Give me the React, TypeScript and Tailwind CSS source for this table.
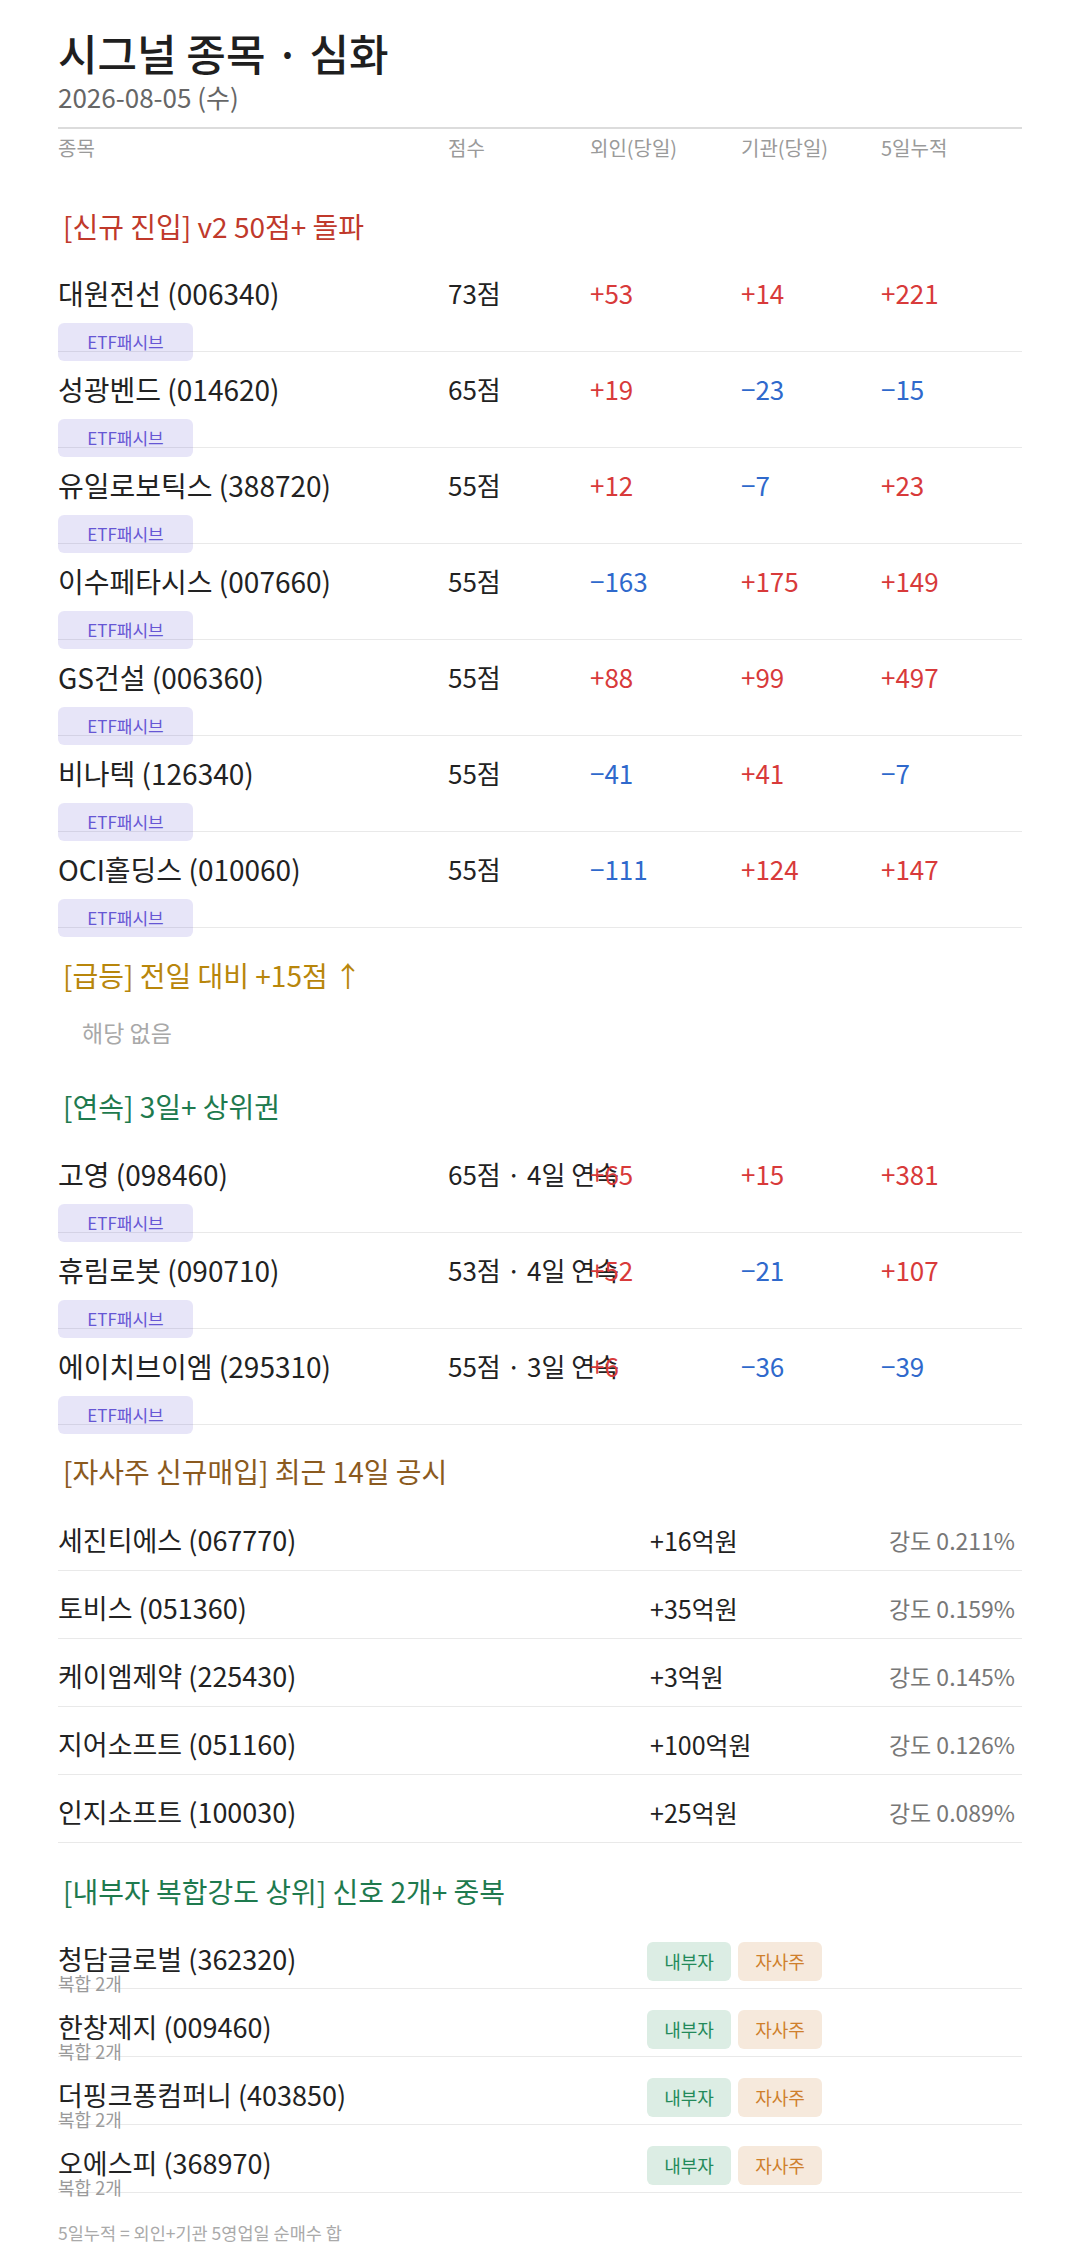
type Flow = {
  name: string;
  code: string;
  score: string;
  foreign: string;
  inst: string;
  cum5: string;
};

type Buyback = { name: string; code: string; amount: string; strength: string };

type Insider = { name: string; code: string; combo: string };

const NEW_ENTRIES: Flow[] = [
  { name: "대원전선",     code: "006340", score: "73점", foreign: "+53",  inst: "+14",  cum5: "+221" },
  { name: "성광벤드",     code: "014620", score: "65점", foreign: "+19",  inst: "−23",  cum5: "−15" },
  { name: "유일로보틱스", code: "388720", score: "55점", foreign: "+12",  inst: "−7",   cum5: "+23" },
  { name: "이수페타시스", code: "007660", score: "55점", foreign: "−163", inst: "+175", cum5: "+149" },
  { name: "GS건설",       code: "006360", score: "55점", foreign: "+88",  inst: "+99",  cum5: "+497" },
  { name: "비나텍",       code: "126340", score: "55점", foreign: "−41",  inst: "+41",  cum5: "−7" },
  { name: "OCI홀딩스",    code: "010060", score: "55점", foreign: "−111", inst: "+124", cum5: "+147" },
];

const STREAKS: Flow[] = [
  { name: "고영",         code: "098460", score: "65점 · 4일 연속", foreign: "+65", inst: "+15", cum5: "+381" },
  { name: "휴림로봇",     code: "090710", score: "53점 · 4일 연속", foreign: "+52", inst: "−21", cum5: "+107" },
  { name: "에이치브이엠", code: "295310", score: "55점 · 3일 연속", foreign: "+6",  inst: "−36", cum5: "−39" },
];

const BUYBACKS: Buyback[] = [
  { name: "세진티에스", code: "067770", amount: "+16억원",  strength: "강도 0.211%" },
  { name: "토비스",     code: "051360", amount: "+35억원",  strength: "강도 0.159%" },
  { name: "케이엠제약", code: "225430", amount: "+3억원",   strength: "강도 0.145%" },
  { name: "지어소프트", code: "051160", amount: "+100억원", strength: "강도 0.126%" },
  { name: "인지소프트", code: "100030", amount: "+25억원",  strength: "강도 0.089%" },
];

const INSIDERS: Insider[] = [
  { name: "청담글로벌",     code: "362320", combo: "복합 2개" },
  { name: "한창제지",       code: "009460", combo: "복합 2개" },
  { name: "더핑크퐁컴퍼니", code: "403850", combo: "복합 2개" },
  { name: "오에스피",       code: "368970", combo: "복합 2개" },
];

// ─── Pieces ────────────────────────────────────────────────────────────────────

function Num({ value }: { value: string }) {
  const negative = value.startsWith("−");
  return (
    <span className={`whitespace-nowrap ${negative ? "text-[#2f69cc]" : "text-[#d83a3a]"}`}>
      {value}
    </span>
  );
}

function SectionTitle({ color, children }: { color: string; children: React.ReactNode }) {
  return (
    <h2 className={`pl-[5px] text-[28px] leading-[36px] whitespace-nowrap ${color}`}>{children}</h2>
  );
}

function FlowRow({ row }: { row: Flow }) {
  return (
    <div className="border-b border-[#e9e9e9] pt-[19px]">
      <div className="grid grid-cols-[390px_142px_151px_140px_141px] text-[26px] leading-[36px] text-[#222]">
        <span className="text-[28px] whitespace-nowrap">
          {row.name} ({row.code})
        </span>
        <span className="whitespace-nowrap">{row.score}</span>
        <Num value={row.foreign} />
        <Num value={row.inst} />
        <Num value={row.cum5} />
      </div>
      <div className="mt-[12px] -mb-[10px] w-[135px] h-[38px] rounded-[6px] bg-[#6b5bd6]/[0.16] text-center text-[17px] leading-[38px] text-[#6656d4]">
        ETF패시브
      </div>
    </div>
  );
}

// ─── Page ──────────────────────────────────────────────────────────────────────

export default function App() {
  return (
    <div className="min-h-screen bg-white px-[58px] pt-[26px] pb-[4px] font-['Noto_Sans_CJK_KR','Noto_Sans',sans-serif] text-[#222]">
      {/* Heading */}
      <h1 className="text-[43px] leading-[52px] font-medium text-[#1f1f1f]">시그널 종목 · 심화</h1>
      <div className="mt-[4px] text-[26px] leading-[30px] text-[#666]">2026-08-05 (수)</div>

      {/* Column header */}
      <div className="mt-[15px] border-t-2 border-[#dcdcdc] pt-[7px] grid grid-cols-[390px_142px_151px_140px_141px] text-[20px] leading-[24px] text-[#9a9a9a]">
        <span>종목</span>
        <span>점수</span>
        <span>외인(당일)</span>
        <span>기관(당일)</span>
        <span>5일누적</span>
      </div>

      {/* 신규 진입 */}
      <div className="mt-[48px]">
        <SectionTitle color="text-[#c0392b]">[신규 진입] v2 50점+ 돌파</SectionTitle>
        <div className="mt-[12px]">
          {NEW_ENTRIES.map((row) => (
            <FlowRow key={row.code} row={row} />
          ))}
        </div>
      </div>

      {/* 급등 */}
      <div className="mt-[29px]">
        <SectionTitle color="text-[#b8860b]">[급등] 전일 대비 +15점 ↑</SectionTitle>
        <p className="mt-[24px] pl-[24px] text-[23px] leading-[30px] text-[#a8a8a8]">해당 없음</p>
      </div>

      {/* 연속 */}
      <div className="mt-[41px]">
        <SectionTitle color="text-[#1e7a4e]">[연속] 3일+ 상위권</SectionTitle>
        <div className="mt-[13px]">
          {STREAKS.map((row) => (
            <FlowRow key={row.code} row={row} />
          ))}
        </div>
      </div>

      {/* 자사주 */}
      <div className="mt-[28px]">
        <SectionTitle color="text-[#8b5a1e]">[자사주 신규매입] 최근 14일 공시</SectionTitle>
        <div className="mt-[14px]">
          {BUYBACKS.map((row) => (
            <div
              key={row.code}
              className="border-b border-[#e9e9e9] pt-[19px] pb-[12px] grid grid-cols-[592px_1fr_auto] items-center"
            >
              <span className="text-[27px] leading-[36px] text-[#222] whitespace-nowrap">
                {row.name} ({row.code})
              </span>
              <span className="text-[25px] leading-[36px] text-[#222] whitespace-nowrap">{row.amount}</span>
              <span className="pr-[7px] text-[23px] leading-[36px] text-[#777] whitespace-nowrap">
                {row.strength}
              </span>
            </div>
          ))}
        </div>
      </div>

      {/* 내부자 */}
      <div className="mt-[30px]">
        <SectionTitle color="text-[#1e7a4e]">[내부자 복합강도 상위] 신호 2개+ 중복</SectionTitle>
        <div className="mt-[12px]">
          {INSIDERS.map((row) => (
            <div key={row.code} className="border-b border-[#e9e9e9] pt-[22px] flex items-start">
              <div className="w-[589px] -mb-[4px]">
                <div className="text-[27px] leading-[32px] text-[#222] whitespace-nowrap">
                  {row.name} ({row.code})
                </div>
                <div className="text-[18px] leading-[17px] text-[#9a9a9a]">{row.combo}</div>
              </div>
              <div className="flex gap-[7px] -mt-[1px]">
                <span className="w-[84px] h-[39px] rounded-[6px] bg-[#dcede4] text-center text-[18px] leading-[39px] text-[#238a5a]">
                  내부자
                </span>
                <span className="w-[84px] h-[39px] rounded-[6px] bg-[#f6e9dc] text-center text-[18px] leading-[39px] text-[#cf7f2c]">
                  자사주
                </span>
              </div>
            </div>
          ))}
        </div>
      </div>

      {/* Footnote */}
      <p className="mt-[28px] text-[17.5px] leading-[24px] text-[#aaa]">5일누적 = 외인+기관 5영업일 순매수 합</p>
    </div>
  );
}
